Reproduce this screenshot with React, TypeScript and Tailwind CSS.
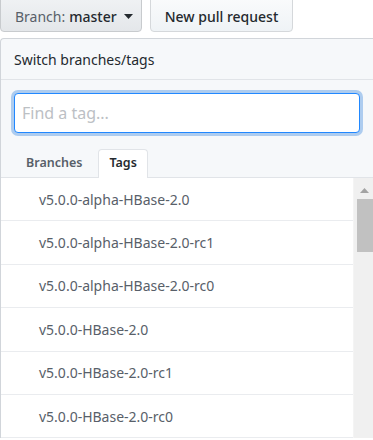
import type { ReactNode } from 'react'

const tags = [
  'v5.0.0-alpha-HBase-2.0',
  'v5.0.0-alpha-HBase-2.0-rc1',
  'v5.0.0-alpha-HBase-2.0-rc0',
  'v5.0.0-HBase-2.0',
  'v5.0.0-HBase-2.0-rc1',
  'v5.0.0-HBase-2.0-rc0',
]

function Caret(): ReactNode {
  return (
    <svg width="9" height="5" viewBox="0 0 9 5" className="ml-[7px] mt-[1px]">
      <path d="M0 0h9L4.5 5z" fill="#24292e" />
    </svg>
  )
}

export default function App(): ReactNode {
  return (
    <div
      className="h-[440px] w-[373px] overflow-hidden bg-white text-[#24292e]"
      style={{ fontFamily: '"Noto Sans", "Open Sans", sans-serif' }}
    >
      <div className="-mt-[4px] flex gap-[8px]">
        <button className="flex h-[36px] w-[142px] items-center rounded-b-[4px] border border-[#c8cbce] bg-gradient-to-b from-[#f0f2f4] to-[#e4e7ea] pl-[14px] pt-[4px] text-[14px]">
          <span className="text-[#586069]">Branch:</span>
          <span className="ml-[4px] font-medium">master</span>
          <Caret />
        </button>
        <button className="flex h-[36px] w-[143px] items-center justify-center rounded-b-[4px] border border-[#d5d8db] bg-gradient-to-b from-[#fafbfc] to-[#eff3f6] pt-[4px] text-[14px] font-medium">
          New pull request
        </button>
      </div>

      <div className="mt-[6px] w-[400px] rounded-tl-[4px] border-l border-t border-[#d1d5da] bg-[#f6f8fa]">
        <div className="flex h-[41px] items-center border-b border-[#e1e4e8] pl-[13px] text-[14px]">
          Switch branches/tags
        </div>

        <div className="pl-[13px] pt-[13px]">
          <div className="flex h-[40px] w-[346px] items-center rounded-[4px] border border-[#2188ff] bg-white pl-[7px] text-[16px] text-[#bcc0c4] shadow-[0_0_0_3px_rgba(3,102,214,0.3)]">
            Find a tag...
          </div>
        </div>

        <div className="mt-[17px] flex h-[28px] items-end border-b border-[#e1e4e8] pl-[13px] text-[12.5px] font-semibold">
          <div className="flex h-[28px] items-center px-[12px] text-[#586069]">Branches</div>
          <div className="-mb-px ml-[4px] flex h-[29px] items-center rounded-t-[4px] border border-b-0 border-[#e1e4e8] bg-white px-[10px] pb-[1px]">
            Tags
          </div>
        </div>

        <div className="flex bg-white">
          <div className="w-[352px]">
            {tags.map((t) => (
              <div
                key={t}
                className="flex h-[43.4px] items-center border-b border-[#eaecef] pl-[38px] text-[14px] text-[#586069]"
              >
                {t}
              </div>
            ))}
          </div>
          <div className="flex w-[21px] flex-col items-center border-l border-[#f4f4f4] bg-[#f0f0f0] pt-[10px]">
            <svg width="9" height="5" viewBox="0 0 9 5">
              <path d="M0 5L4.5 0 9 5z" fill="#a3a3a3" />
            </svg>
            <div className="mt-[6px] ml-[2px] h-[53px] w-[17px] bg-[#c1c1c1]" />
          </div>
        </div>
      </div>
    </div>
  )
}
